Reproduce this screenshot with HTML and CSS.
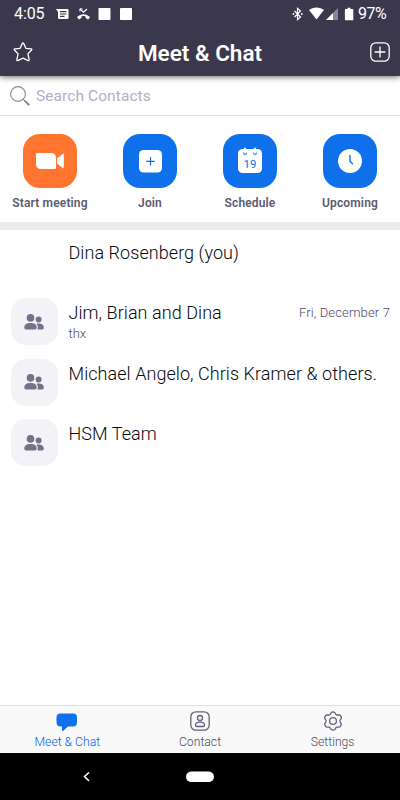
FILE: index.html
```html
<!DOCTYPE html>
<html lang="en">
<head>
    <meta charset="UTF-8">
    <meta name="viewport" content="width=device-width, initial-scale=1.0">
    <title>Meet &amp; Chat</title>
    <link rel="stylesheet" href="styles.css">
</head>

<body>
    <header class="top">
        <div class="status-bar">
            <span class="clock">4:05</span>
            <svg class="status-left" width="78" height="14" viewBox="0 0 78 14" fill="#fff">
                <path fill-rule="evenodd" d="M0 2h11.500a1 1 0 0 1 1 1v8a1 1 0 0 1-1 1H3a1 1 0 0 1-1-1V5zM4 4v1.200h6.500V4zM4 6.400v1.200h6.500V6.400zM4 8.800V10h4.500V8.800z"/>
                <path d="M24 2l3.500 3.200L31 2" fill="none" stroke="#fff" stroke-width="1.300"/>
                <path d="M23.900 4.400V1.900h2.600" fill="none" stroke="#fff" stroke-width="1"/>
                <path d="M21 10.200c3.600-4 9.400-4 13 0l-2 2.200-2.600-1.600V9.200c-1.200-.4-2.600-.4-3.800 0v1.600L23 12.400z"/>
                <rect x="42.500" y="1" width="12" height="12" rx=".8"/>
                <rect x="64" y="1" width="12" height="12" rx=".8"/>
            </svg>
            <svg class="status-right" width="62" height="14" viewBox="0 0 62 14" fill="#fff">
                <path d="M2.500 4l6 6-3 2.600V1.400l3 2.600-6 6" fill="none" stroke="#fff" stroke-width="1.200"/>
                <circle cx="1.400" cy="7" r=".9"/>
                <circle cx="9.800" cy="7" r=".9"/>
                <path d="M17 3c4.200-3.500 10.800-3.500 15 0l-7.500 9.500z"/>
                <path d="M46 1v12H34z" opacity=".4"/>
                <path d="M41 6v7h-7z"/>
                <path d="M55.500 2V.8h3V2h2.200q.6 0 .6.600V12.700q0 .6-.6.600h-7.200q-.6 0-.6-.6V2.600q0-.6.600-.6z"/>
            </svg>
            <span class="battery">97%</span>
        </div>
        <div class="title-bar">
            <svg width="20" height="20" viewBox="0 0 20 20" fill="none" stroke="#fff" stroke-width="1.300" stroke-linejoin="round">
                <path d="M9.300 1.400q.7-1 1.400 0l2.200 4.900 5.200.5q1.200.3.500 1.200l-3.700 3.900 1.300 5.900q0 1.200-1.100.8L10 16.200l-5.100 2.400q-1.100.4-1.100-.8l1.300-5.900L1.400 8q-.7-.9.5-1.200l5.200-.5z"/>
            </svg>
            <h1>Meet &amp; Chat</h1>
            <svg width="20" height="20" viewBox="0 0 20 20" fill="none" stroke="#fff" stroke-width="1.300">
                <rect x=".8" y=".8" width="18.400" height="18.400" rx="5"/>
                <path d="M10 4.600v10.800M4.600 10h10.800"/>
            </svg>
        </div>
    </header>

    <div class="search">
        <svg width="20" height="20" viewBox="0 0 20 20" fill="none" stroke="#8a8a8a">
            <circle cx="8" cy="8" r="7.400" stroke-width="1.100"/>
            <path d="M13.200 13.200l1.600 1.600" stroke-width="1.100"/>
            <path d="M14.600 14.600l4.600 4.600" stroke-width="2"/>
        </svg>
        <span>Search Contacts</span>
    </div>

    <div class="actions">
        <div class="action">
            <div class="tile orange">
                <svg width="54" height="54" viewBox="0 0 54 54" fill="#fff">
                    <path d="M13 20.500q0-1.500 1.500-1.500H28q5 0 5 5v9.500q0 1.500-1.500 1.500H18q-5 0-5-5zM34 24.500l5.500-4.600q1.300-1 1.300.8v12.600q0 1.800-1.300.8L34 29.500z"/>
                </svg>
            </div>
            <span>Start meeting</span>
        </div>
        <div class="action">
            <div class="tile">
                <svg width="54" height="54" viewBox="0 0 54 54">
                    <rect x="16" y="16" width="23" height="22.500" rx="4.500" fill="#fff"/>
                    <path d="M27.500 23v8.600M23.200 27.300h8.600" stroke="#0e71eb" stroke-width="1.200"/>
                </svg>
            </div>
            <span>Join</span>
        </div>
        <div class="action">
            <div class="tile">
                <svg width="54" height="54" viewBox="0 0 54 54">
                    <rect x="15" y="15" width="24" height="24" rx="4.500" fill="#fff"/>
                    <path d="M22 13.700v3.500M32 13.700v3.500" stroke="#fff" stroke-width="1.800"/>
                    <path d="M20.500 18.500q0 2 1.500 2t1.500-2M30.500 18.500q0 2 1.500 2t1.500-2" fill="none" stroke="#3b8af0" stroke-width="1.200"/>
                    <text class="day" x="27" y="33.600" text-anchor="middle">19</text>
                </svg>
            </div>
            <span>Schedule</span>
        </div>
        <div class="action">
            <div class="tile">
                <svg width="54" height="54" viewBox="0 0 54 54">
                    <circle cx="27" cy="27" r="12" fill="#fff"/>
                    <path d="M27 21v6.200l2.800 3" fill="none" stroke="#0e71eb" stroke-width="1.400"/>
                </svg>
            </div>
            <span>Upcoming</span>
        </div>
    </div>

    <main class="chats">
        <div class="chat">
            <div class="avatar empty"></div>
            <div class="chat-text"><h2>Dina Rosenberg (you)</h2></div>
        </div>
        <div class="chat">
            <div class="avatar">
                <svg width="20" height="16" viewBox="0 0 20 16" fill="#747287">
                    <circle cx="6.500" cy="3.900" r="3.800"/>
                    <path d="M.3 13.500c0-3 2.500-4.400 6.200-4.400s6.200 1.400 6.200 4.400c0 1.200-.6 1.900-1.700 1.900H2C.9 15.400.3 14.700.3 13.500z"/>
                    <circle cx="14.600" cy="5.600" r="3"/>
                    <path d="M12.300 9.800c4.200-.7 7.500.7 7.500 3.900 0 1-.6 1.700-1.500 1.700h-5c1-1.500.8-4-1-5.600z"/>
                </svg>
            </div>
            <div class="chat-text">
                <h2>Jim, Brian and Dina</h2>
                <p>thx</p>
            </div>
            <time>Fri, December 7</time>
        </div>
        <div class="chat">
            <div class="avatar">
                <svg width="20" height="16" viewBox="0 0 20 16" fill="#747287">
                    <circle cx="6.500" cy="3.900" r="3.800"/>
                    <path d="M.3 13.500c0-3 2.500-4.400 6.200-4.400s6.200 1.400 6.200 4.400c0 1.200-.6 1.900-1.700 1.900H2C.9 15.400.3 14.700.3 13.500z"/>
                    <circle cx="14.600" cy="5.600" r="3"/>
                    <path d="M12.300 9.800c4.200-.7 7.500.7 7.500 3.900 0 1-.6 1.700-1.500 1.700h-5c1-1.500.8-4-1-5.600z"/>
                </svg>
            </div>
            <div class="chat-text"><h2>Michael Angelo, Chris Kramer &amp; others.</h2></div>
        </div>
        <div class="chat">
            <div class="avatar">
                <svg width="20" height="16" viewBox="0 0 20 16" fill="#747287">
                    <circle cx="6.500" cy="3.900" r="3.800"/>
                    <path d="M.3 13.500c0-3 2.500-4.400 6.200-4.400s6.200 1.400 6.200 4.400c0 1.200-.6 1.900-1.700 1.900H2C.9 15.400.3 14.700.3 13.500z"/>
                    <circle cx="14.600" cy="5.600" r="3"/>
                    <path d="M12.300 9.800c4.200-.7 7.500.7 7.500 3.900 0 1-.6 1.700-1.500 1.700h-5c1-1.500.8-4-1-5.600z"/>
                </svg>
            </div>
            <div class="chat-text"><h2>HSM Team</h2></div>
        </div>
    </main>

    <nav class="tabs">
        <div class="tab active">
            <svg width="22" height="20" viewBox="0 0 22 20" fill="#0e71eb">
                <path d="M4.500 2.500h12.500q4 0 4 4V11q0 4.500-4 4.500h-5L7.200 19.800q-1.200 1-1.200-.6v-3.700H4.500q-4 0-4-4.500V6.500q0-4 4-4z"/>
            </svg>
            <span>Meet &amp; Chat</span>
        </div>
        <div class="tab">
            <svg width="20" height="20" viewBox="0 0 20 20" fill="none" stroke="#64607a" stroke-width="1.300">
                <rect x=".8" y=".8" width="18.400" height="18.400" rx="5"/>
                <circle cx="10" cy="7" r="2.500"/>
                <path d="M5.500 14.200c0-2 1.700-3 4.500-3s4.500 1 4.500 3c0 .8-.5 1.300-1.300 1.300H6.800c-.8 0-1.300-.5-1.300-1.300z"/>
            </svg>
            <span>Contact</span>
        </div>
        <div class="tab">
            <svg width="20" height="20" viewBox="0 0 20 20" fill="none" stroke="#64607a" stroke-width="1.300" stroke-linejoin="round">
                <path d="M8.300 1.500q1.700-1.200 3.400 0l1.200 2q.6.600 1.500.5h2q1.500.4 1.900 2.300.3 1-.6 2l-.6.9q-.4.800 0 1.600l.9 1.500q.6 1.200-.2 2.400-.8 1.500-2.200 1.500h-1.500q-.8.100-1.300.8l-.8 1.300q-2 1.500-4 0l-.8-1.300q-.5-.7-1.300-.8H4.400q-1.400 0-2.200-1.500-.8-1.200-.2-2.400l.9-1.500q.4-.8 0-1.600l-.6-.9q-.9-1-.6-2Q2.100 4.400 3.600 4h2q.9.100 1.500-.5z"/>
                <circle cx="10" cy="10" r="3.400"/>
            </svg>
            <span>Settings</span>
        </div>
    </nav>

    <div class="system-nav">
        <svg width="400" height="47" viewBox="0 0 400 47">
            <path d="M89 19.500l-4.500 4 4.500 4.500" fill="none" stroke="#fff" stroke-width="1.600"/>
            <rect x="186" y="18.500" width="28" height="10.500" rx="5.250" fill="#fff"/>
        </svg>
    </div>
</body>

</html>
```
FILE: styles.css
```css
* {
    box-sizing: border-box;
}

body {
    margin: 0;
    width: 400px;
    height: 800px;
    display: flex;
    flex-direction: column;
    overflow: hidden;
    background: #fff;
    font-family: Roboto, "Liberation Sans", sans-serif;
}

h1, h2, p {
    margin: 0;
}

svg {
    display: block;
    flex: none;
}

.top {
    flex: none;
    height: 76px;
    background: #3b384d;
    color: #fff;
    box-shadow: 0 1px 6px rgba(0, 0, 0, 0.6);
    z-index: 1;
}

.status-bar {
    display: flex;
    align-items: center;
    height: 28px;
    padding: 0 13px 0 14px;
    white-space: nowrap;
}

.clock {
    width: 42px;
    font-size: 16px;
    line-height: 30px;
    letter-spacing: -0.1px;
}

.status-right {
    margin-left: auto;
    margin-right: 4px;
}

.battery {
    width: 29px;
    font-size: 16px;
    line-height: 30px;
    letter-spacing: -0.5px;
}

.title-bar {
    display: flex;
    align-items: center;
    justify-content: space-between;
    height: 48px;
    padding: 0 10px 0 13px;
}

h1 {
    padding-top: 1px;
    padding-right: 3px;
    font-size: 22.5px;
    line-height: 28px;
    font-weight: 600;
}

.search {
    flex: none;
    display: flex;
    align-items: center;
    gap: 6px;
    height: 40px;
    padding: 0 10px;
    border-bottom: 1px solid #e3e3e3;
    color: #b0aec9;
    font-size: 15.5px;
    font-weight: 370;
    line-height: 20px;
    letter-spacing: 0.08px;
}

.search span {
    padding-top: 1px;
}

.actions {
    flex: none;
    display: flex;
    height: 114px;
    padding-top: 18px;
    border-bottom: 8px solid #ececec;
}

.action {
    flex: 1;
    display: flex;
    flex-direction: column;
    align-items: center;
    gap: 8px;
    color: #5c5972;
    font-size: 12px;
    line-height: 15px;
    font-weight: 600;
    letter-spacing: 0.15px;
    white-space: nowrap;
}

.tile {
    width: 54px;
    height: 54px;
    border-radius: 17px;
    background: #0e71eb;
}

.tile.orange {
    background: #ff742e;
}

.day {
    fill: #0e71eb;
    font-size: 11.5px;
    font-weight: 450;
    letter-spacing: 0;
}

.chats {
    flex: 1;
}

.chat {
    display: flex;
    height: 60.5px;
    padding: 7.5px 10px 0 11px;
}

.avatar {
    display: flex;
    align-items: center;
    justify-content: center;
    flex: none;
    width: 47px;
    height: 47px;
    padding-right: 1px;
    border-radius: 15px;
    background: #f2f2f7;
}

.avatar.empty {
    background: none;
}

.chat-text {
    flex: 1;
    padding: 3px 0 0 10.5px;
    white-space: nowrap;
}

h2 {
    font-size: 18px;
    line-height: 24px;
    font-weight: 360;
    letter-spacing: 0.06px;
    color: #08080c;
}

.chat-text p {
    font-size: 13px;
    line-height: 18px;
    font-weight: 350;
    color: #4d4968;
}

time {
    padding-top: 6px;
    font-size: 13px;
    line-height: 18px;
    font-weight: 360;
    letter-spacing: 0.14px;
    color: #4d4968;
}

.tabs {
    flex: none;
    display: flex;
    justify-content: space-between;
    height: 48px;
    padding: 0 1px;
    border-top: 1px solid #dedede;
    background: #f9f9f9;
}

.tab {
    flex: 1;
    display: flex;
    flex-direction: column;
    align-items: center;
    gap: 4px;
    padding-top: 5px;
    color: #4d4968;
    font-size: 12.2px;
    line-height: 15px;
    font-weight: 360;
}

.tab.active {
    color: #0062ea;
}

.system-nav {
    flex: none;
    height: 47px;
    background: #000;
}
```
